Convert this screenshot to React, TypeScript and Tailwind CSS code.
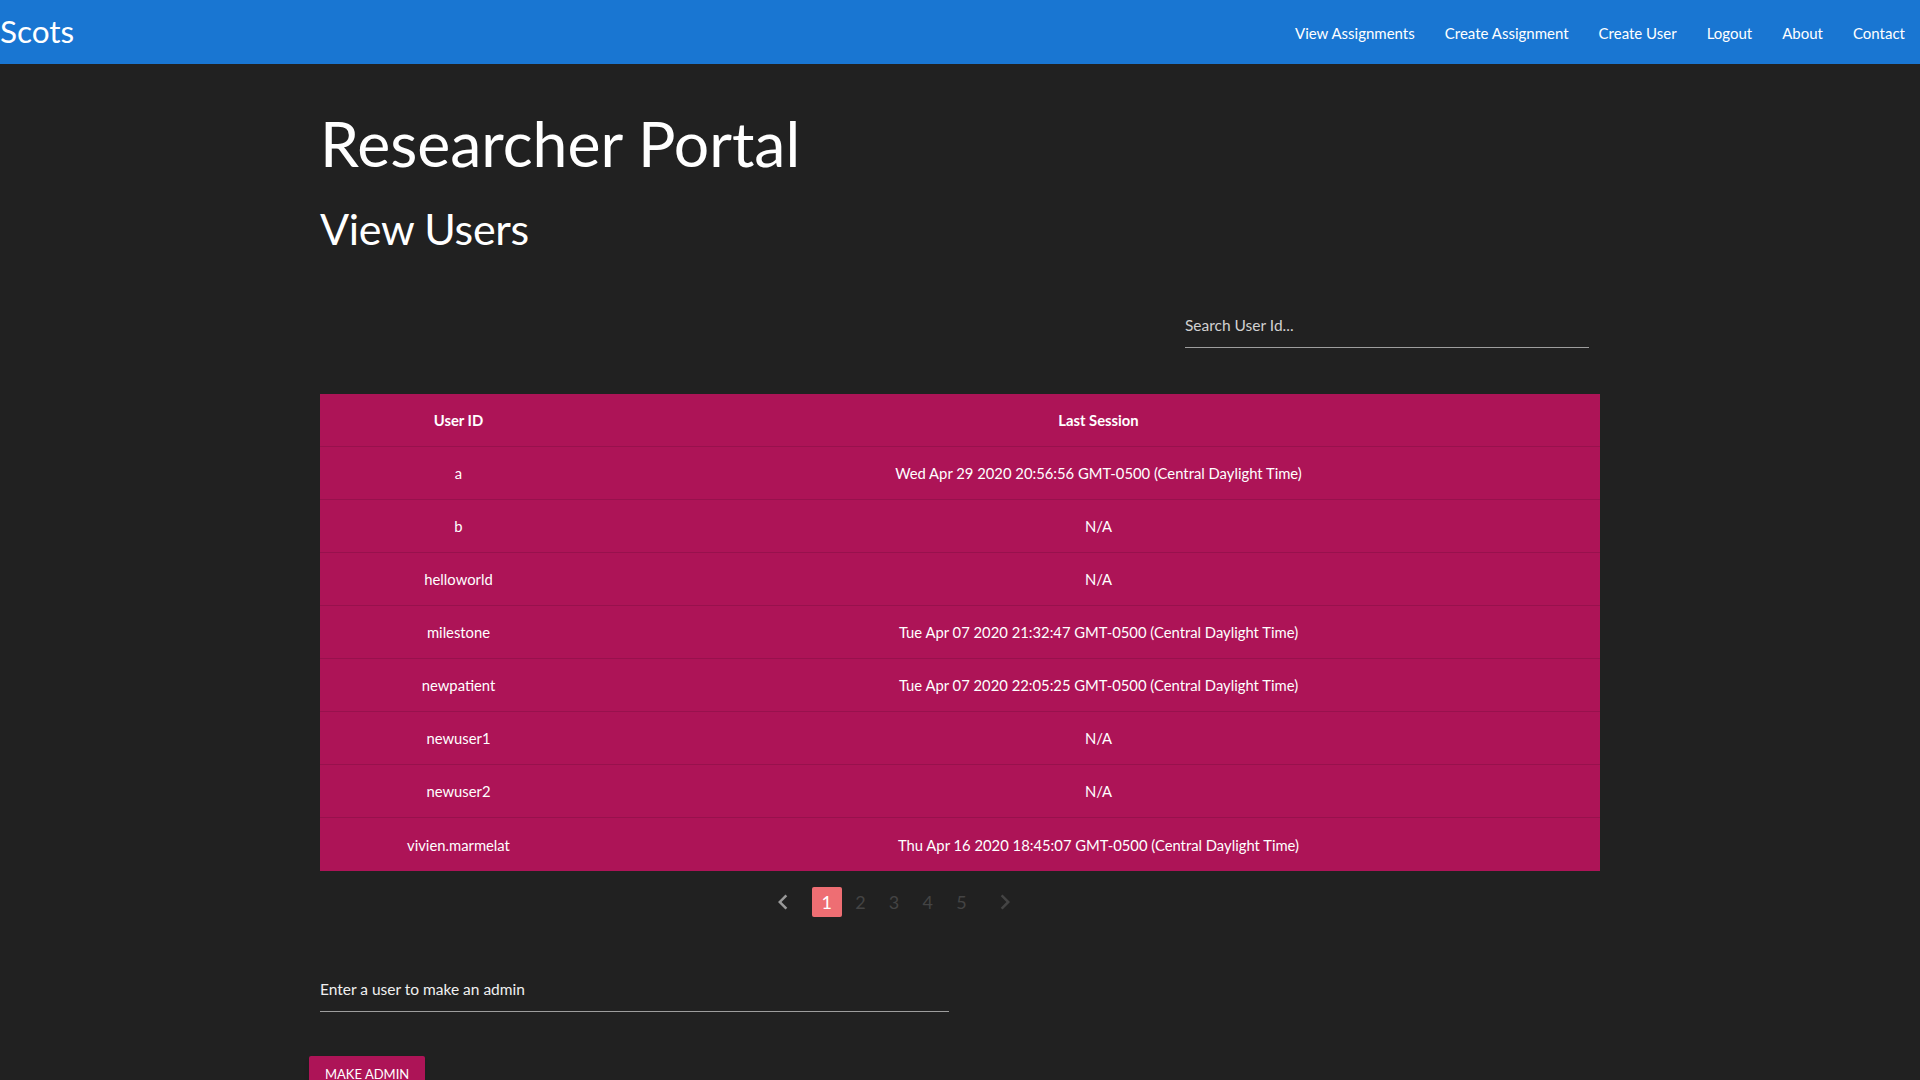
import React, { useState } from 'react';

const users = [
  { id: 'a', lastSession: 'Wed Apr 29 2020 20:56:56 GMT-0500 (Central Daylight Time)' },
  { id: 'b', lastSession: 'N/A' },
  { id: 'helloworld', lastSession: 'N/A' },
  { id: 'milestone', lastSession: 'Tue Apr 07 2020 21:32:47 GMT-0500 (Central Daylight Time)' },
  { id: 'newpatient', lastSession: 'Tue Apr 07 2020 22:05:25 GMT-0500 (Central Daylight Time)' },
  { id: 'newuser1', lastSession: 'N/A' },
  { id: 'newuser2', lastSession: 'N/A' },
  { id: 'vivien.marmelat', lastSession: 'Thu Apr 16 2020 18:45:07 GMT-0500 (Central Daylight Time)' },
];

const navLinks = ['View Assignments', 'Create Assignment', 'Create User', 'Logout', 'About', 'Contact'];

const Chevron: React.FC<{ dir: 'left' | 'right'; className?: string }> = ({ dir, className }) => (
  <svg viewBox="0 0 24 24" width="30" height="30" className={className} fill="currentColor">
    {dir === 'left' ? (
      <path d="M15.41 7.41L14 6l-6 6 6 6 1.41-1.41L10.83 12z" />
    ) : (
      <path d="M10 6L8.59 7.41 13.17 12l-4.58 4.59L10 18l6-6z" />
    )}
  </svg>
);

const App: React.FC = () => {
  const [search, setSearch] = useState('');
  const [adminUser, setAdminUser] = useState('');
  const [page, setPage] = useState(1);

  const filtered = users.filter((u) => u.id.toLowerCase().includes(search.toLowerCase()));

  return (
    <div className="min-h-screen bg-[#212121] text-white font-['Lato','Open_Sans',sans-serif]">
      <nav className="h-16 bg-[#1976d2] flex items-center justify-between">
        <a className="text-[31.5px] leading-none text-white">Scots</a>
        <ul className="flex items-center pt-[2px]">
          {navLinks.map((link) => (
            <li key={link}>
              <a className="block px-[15px] text-[15px] text-white cursor-pointer">{link}</a>
            </li>
          ))}
        </ul>
      </nav>

      <div className="w-[1280px] mx-auto">
        <h1 className="mt-[44px] text-[62.5px] leading-[69.3px] font-normal">Researcher Portal</h1>
        <h3 className="mt-[27px] text-[43px] leading-[49.5px] font-normal tracking-[-0.3px]">View Users</h3>

        <div className="flex justify-end mt-[49.5px] mr-[11px]">
          <input
            value={search}
            onChange={(e) => setSearch(e.target.value)}
            placeholder="Search User Id..."
            className="w-[404px] h-[45px] bg-transparent border-b border-[#9e9e9e] text-[15.5px] text-white placeholder:text-[#d1d1d1] outline-none"
          />
        </div>

        <div className="mt-[46px] bg-[#ad1457] text-[14.8px]">
          <div className="grid grid-cols-[277px_1fr] h-[53px] items-center text-center font-bold border-b border-[#98114d]">
            <div>User ID</div>
            <div>Last Session</div>
          </div>
          {filtered.map((u) => (
            <div
              key={u.id}
              className="grid grid-cols-[277px_1fr] h-[53px] items-center text-center border-b border-[#98114d] last:border-b-0"
            >
              <div>{u.id}</div>
              <div>{u.lastSession}</div>
            </div>
          ))}
        </div>

        <ul className="flex items-center mt-[16px] ml-[448px] gap-[3.7px] text-[18px]">
          <li className="w-[30px] h-[30px] mr-[10px] flex items-center justify-center text-[#999]">
            <Chevron dir="left" />
          </li>
          {[1, 2, 3, 4, 5].map((n) => (
            <li
              key={n}
              onClick={() => setPage(n)}
              className={
                n === page
                  ? 'w-[30px] h-[30px] rounded-[2px] bg-[#ee6e73] text-white flex items-center justify-center cursor-pointer'
                  : 'w-[30px] h-[30px] rounded-[2px] text-[#444] flex items-center justify-center cursor-pointer'
              }
            >
              {n}
            </li>
          ))}
          <li className="w-[30px] h-[30px] ml-[10px] flex items-center justify-center text-[#444]">
            <Chevron dir="right" />
          </li>
        </ul>

        <div className="mt-[50px]">
          <input
            value={adminUser}
            onChange={(e) => setAdminUser(e.target.value)}
            placeholder="Enter a user to make an admin"
            className="w-[629px] h-[45px] bg-transparent border-b border-[#9e9e9e] text-[15.5px] text-white placeholder:text-[#f0f0f0] outline-none"
          />
        </div>

        <button className="mt-[44px] -ml-[11px] h-9 px-4 rounded-[2px] bg-[#ad1457] text-white text-[13px] uppercase shadow-md">
          Make Admin
        </button>
      </div>
    </div>
  );
};

export default App;
